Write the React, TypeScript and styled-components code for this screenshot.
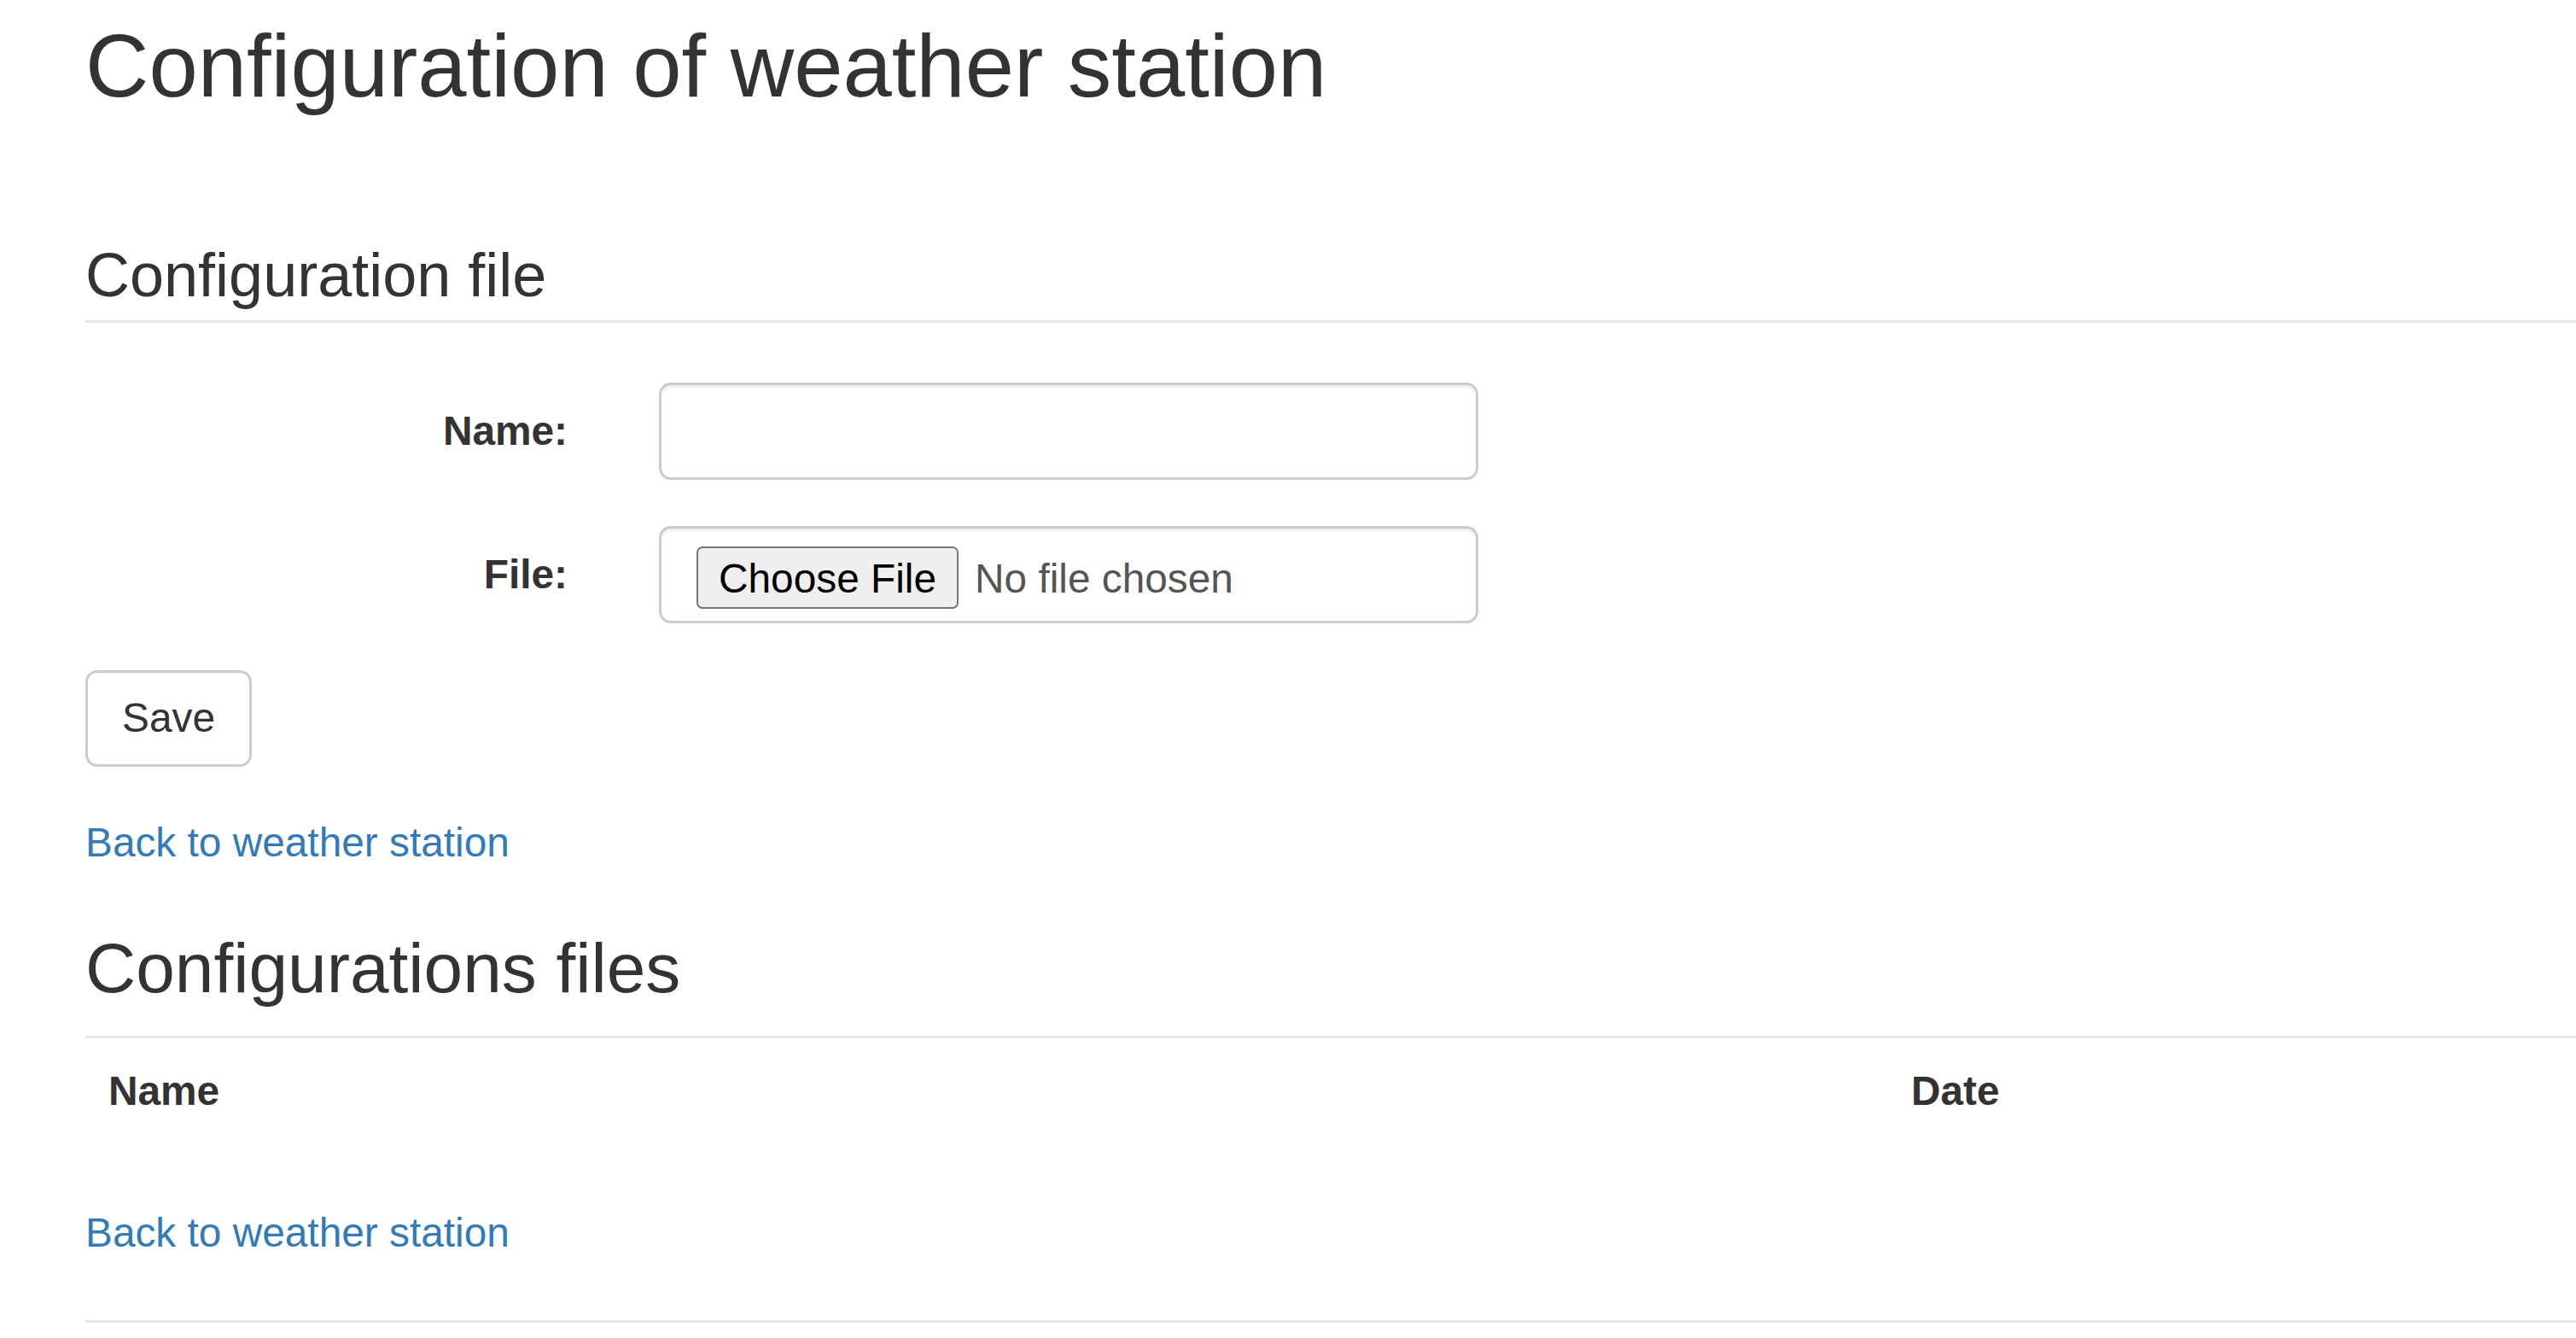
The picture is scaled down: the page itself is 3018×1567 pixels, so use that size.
import React from 'react'
import styled, { createGlobalStyle } from 'styled-components'

// page is a bootstrap 3 layout zoomed ~3.4x, values below are measured px
const GlobalStyle = createGlobalStyle`
  html, body {
    margin: 0;
    padding: 0;
    background: #fff;
    overflow: hidden;
  }
  body {
    font-family: "Liberation Sans", Arial, Helvetica, sans-serif;
    font-size: 47.8px;
    line-height: 68.3px;
    color: #333;
  }
  * {
    box-sizing: border-box;
  }
`

const Page = styled.div`
  padding: 21px 0 0 100px;
`

const Title = styled.h1`
  margin: 0 0 149px;
  font-size: 103px;
  font-weight: 400;
  line-height: 113px;
`

const Legend = styled.div`
  font-size: 72px;
  line-height: 79px;
  padding-bottom: 13px;
  border-bottom: 3px solid #e5e5e5;
  margin-bottom: 70px;
`

const Form = styled.form`
  display: flex;
  flex-direction: column;
  gap: 54px;
`

const FormRow = styled.div`
  display: flex;
  align-items: center;
  gap: 107px;
`

const Label = styled.label`
  width: 565px;
  text-align: right;
  font-weight: 700;
`

const TextInput = styled.input`
  width: 960px;
  height: 114px;
  border: 3px solid #ccc;
  border-radius: 14px;
  box-shadow: inset 0 3px 3px rgba(0, 0, 0, 0.075);
  padding: 0 41px;
  font: inherit;
  color: #555;
  outline: none;
`

const FileBox = styled.div`
  width: 960px;
  height: 114px;
  border: 3px solid #ccc;
  border-radius: 14px;
  box-shadow: inset 0 3px 3px rgba(0, 0, 0, 0.075);
  padding: 6px 41px 0;
  display: flex;
  align-items: center;
  gap: 19px;
  color: #555;
`

const FileButton = styled.button`
  height: 73px;
  padding: 4px 24px 0;
  background: #efefef;
  border: 2px solid #767676;
  border-radius: 7px;
  font: inherit;
  line-height: 1;
  color: #000;
  cursor: pointer;
`

const FileName = styled.span`
  padding-top: 4px;
`

const SaveButton = styled.button`
  align-self: flex-start;
  margin-top: 1px;
  width: 195px;
  height: 113px;
  border: 3px solid #ccc;
  border-radius: 14px;
  background: #fff;
  font: inherit;
  color: #333;
  cursor: pointer;
`

const BackLink = styled.a<{ $top: number }>`
  display: block;
  width: fit-content;
  margin-top: ${(p) => p.$top}px;
  color: #337ab7;
  text-decoration: none;
`

const SectionTitle = styled.h3`
  margin: 68px 0 34px;
  font-size: 82px;
  font-weight: 400;
  line-height: 90px;
`

const Rule = styled.div<{ $top?: number }>`
  margin-top: ${(p) => p.$top ?? 0}px;
  height: 3px;
  background: #e8e8e8;
`

const Table = styled.table`
  width: 100%;
  border-collapse: collapse;
  table-layout: fixed;
`

const Th = styled.th<{ $width?: number }>`
  width: ${(p) => (p.$width ? `${p.$width}px` : 'auto')};
  padding: 28px 27px 27px;
  text-align: left;
  font-weight: 700;
`

export default function App() {
  return (
    <Page>
      <GlobalStyle />
      <Title>Configuration of weather station</Title>

      <Legend>Configuration file</Legend>
      <Form onSubmit={(e) => e.preventDefault()}>
        <FormRow>
          <Label htmlFor="cfg-name">Name:</Label>
          <TextInput id="cfg-name" type="text" />
        </FormRow>
        <FormRow>
          <Label>File:</Label>
          <FileBox>
            <FileButton type="button">Choose File</FileButton>
            <FileName>No file chosen</FileName>
          </FileBox>
        </FormRow>
        <SaveButton type="submit">Save</SaveButton>
      </Form>
      <BackLink href="#" $top={55}>Back to weather station</BackLink>

      <SectionTitle>Configurations files</SectionTitle>
      <Rule />
      <Table>
        <thead>
          <tr>
            <Th $width={2112}>Name</Th>
            <Th>Date</Th>
          </tr>
        </thead>
        <tbody />
      </Table>
      <BackLink href="#" $top={70}>Back to weather station</BackLink>
      <Rule $top={68} />
    </Page>
  )
}
